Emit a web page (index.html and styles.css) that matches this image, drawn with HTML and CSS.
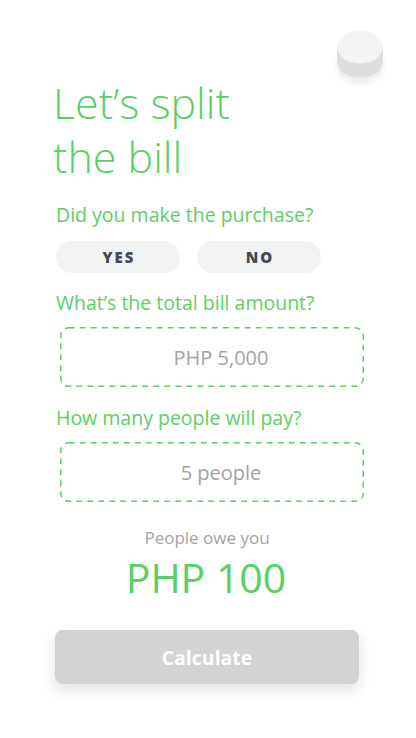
FILE: index.html
```html
<!DOCTYPE html>
<html>
<head>
<meta charset="utf-8">
<link rel="stylesheet" href="styles.css">
</head>
<body>
<div class="app">
  <div class="topbar">
    <svg class="puck" width="60" height="64" viewBox="0 0 60 64">
      <defs>
        <filter id="sh" x="-50%" y="-50%" width="200%" height="200%">
          <feGaussianBlur stdDeviation="3"/>
        </filter>
      </defs>
      <ellipse cx="30" cy="37" rx="24" ry="17" fill="#000" opacity="0.08" filter="url(#sh)"/>
      <path d="M7 18 L7 32 A23 16.5 0 0 0 53 32 L53 18 Z" fill="#dcdddf"/>
      <ellipse cx="30" cy="18" rx="23" ry="16.5" fill="#f3f4f4"/>
    </svg>
  </div>
  <h1 class="title">Let’s split<br>the bill</h1>
  <p class="q q-first">Did you make the purchase?</p>
  <div class="choices">
    <button class="pill">YES</button>
    <button class="pill">NO</button>
  </div>
  <p class="q">What’s the total bill amount?</p>
  <div class="field">PHP 5,000</div>
  <p class="q">How many people will pay?</p>
  <div class="field field-people">5 people</div>
  <p class="owe-label">People owe you</p>
  <p class="owe-amount">PHP 100</p>
  <button class="calc">Calculate</button>
</div>
</body>
</html>
```

FILE: styles.css
```css
html, body {
  margin: 0;
  padding: 0;
  background: #ffffff;
}
body {
  font-family: "Open Sans", "Lato", sans-serif;
  width: 416px;
  height: 738px;
  overflow: hidden;
}
.app {
  padding: 0 52px 0 56px;
  display: flex;
  flex-direction: column;
}
.topbar {
  display: flex;
  justify-content: flex-end;
  align-items: flex-start;
  padding-top: 29px;
  margin-right: -26px;
  height: 47px;
}
.puck {
  display: block;
  flex: none;
}
.title {
  margin: 0 0 0 -3px;
  font-weight: 300;
  font-size: 43px;
  line-height: 54px;
  color: #5bcf63;
}
.q {
  margin: 0;
  font-size: 19.5px;
  line-height: 24px;
  color: #5bcf63;
  font-weight: 400;
  white-space: nowrap;
}
.q-first {
  margin-top: 19px;
}
.choices {
  display: flex;
  gap: 17px;
  margin-top: 14px;
  margin-bottom: 18px;
}
.pill {
  width: 124px;
  height: 32px;
  border: none;
  border-radius: 16px;
  background: #f2f3f3;
  font-family: "Open Sans", sans-serif;
  font-weight: 800;
  font-size: 15px;
  letter-spacing: 2px;
  text-indent: 2px;
  color: #454a52;
  padding: 0;
}
.field {
  margin: 12px 0 19px 4px;
  width: 304px;
  height: 60px;
  box-sizing: border-box;
  background-image: url("data:image/svg+xml,%3Csvg xmlns='http://www.w3.org/2000/svg' width='304' height='60'%3E%3Crect x='0.75' y='0.75' width='302.5' height='58.5' rx='8' ry='8' fill='none' stroke='%235bcf63' stroke-width='1.5' stroke-dasharray='6 5'/%3E%3C/svg%3E");
  background-repeat: no-repeat;
  display: flex;
  align-items: center;
  justify-content: center;
  padding-left: 18px;
  font-size: 20px;
  color: #a3a3a3;
}
.field-people {
  margin-bottom: 26px;
}
.owe-label {
  margin: 0 6px 0 0;
  text-align: center;
  font-size: 17px;
  color: #a3a3a3;
  line-height: 20px;
}
.owe-amount {
  margin: 5px 8px 0 0;
  text-align: center;
  font-size: 41px;
  font-weight: 400;
  line-height: 48px;
  color: #5bcf63;
}
.calc {
  margin-top: 29px;
  margin-left: -1px;
  width: 304px;
  height: 54px;
  border: none;
  border-radius: 8px;
  background: #d3d3d3;
  color: #ffffff;
  font-family: "Open Sans", sans-serif;
  font-weight: 700;
  font-size: 19.5px;
  box-shadow: 0 6px 14px rgba(0,0,0,0.12);
}
```
